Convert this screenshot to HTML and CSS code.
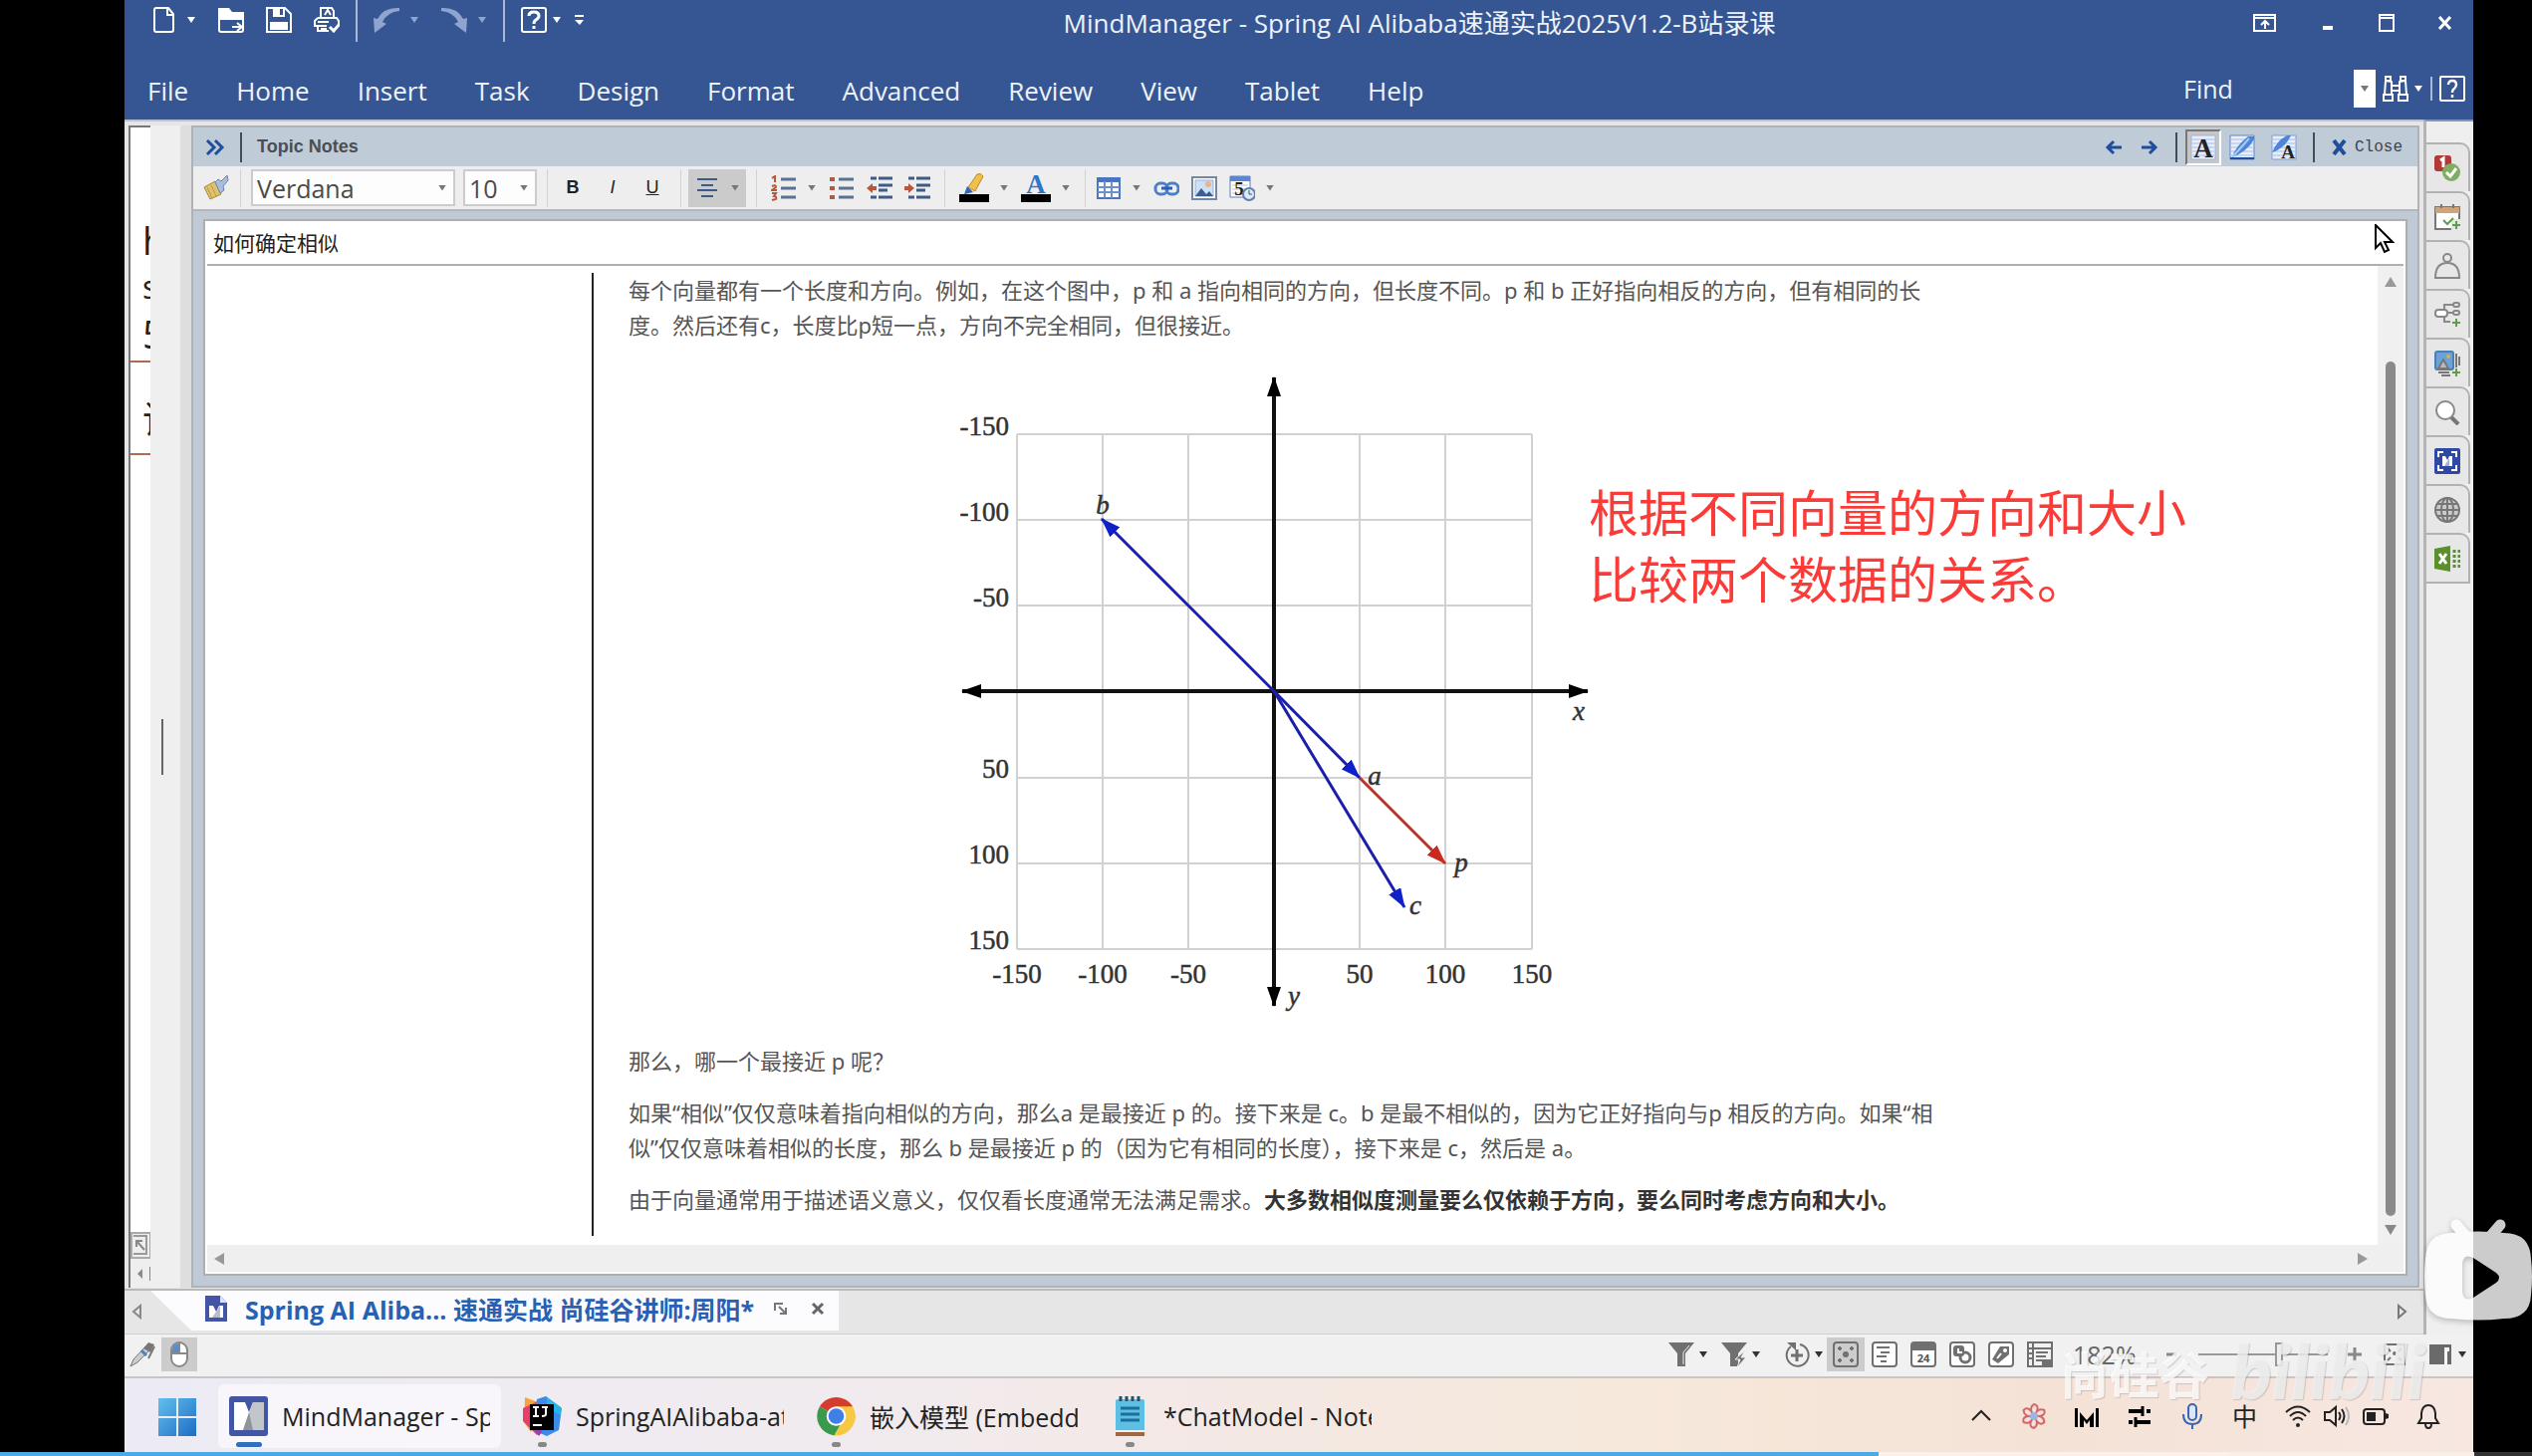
FILE: index.html
```html
<!DOCTYPE html>
<html lang="zh-CN">

<head>
  <meta charset="UTF-8" />
  <meta name="viewport" content="width=device-width, initial-scale=1" />
  <title>MindManager - Spring AI Alibaba速通实战2025V1.2-B站录课</title>
  <link rel="stylesheet" href="styles.css">
</head>

<body>
  <div class="stage">
    <header class="titlebar">
      <div class="title-row">
        <div class="quick-access">
          <button class="split" aria-label="New">
            <svg class="icon" viewBox="0 0 26 26"><path d="M4 3q0-2 2-2h12l5 6v16q0 2-2 2H6q-2 0-2-2zM17 1v7h6" fill="none" stroke="#fff" stroke-width="2"/></svg>
            <span class="caret"></span>
          </button>
          <button aria-label="Open">
            <svg class="icon" viewBox="0 0 26 26"><path d="M0 1h11l3 4h12v8H0z" fill="#fff"/><path d="M1 12v11q0 2 2 2h20q2 0 2-2V12" fill="none" stroke="#fff" stroke-width="2"/><path d="M14 20h10m-5-4 5 4-5 4" fill="none" stroke="#fff" stroke-width="2"/></svg>
          </button>
          <button aria-label="Save">
            <svg class="icon" viewBox="0 0 26 26"><path d="M1 1h18l6 6v18H1z" fill="none" stroke="#fff" stroke-width="2"/><path d="M7 1h12v9H7zM4 15h18v8H4z" fill="#fff"/><path d="M14 2h3v6h-3z" fill="#355693"/></svg>
          </button>
          <button aria-label="Print">
            <svg class="icon" viewBox="0 0 26 26" fill="none" stroke="#fff" stroke-width="2"><path d="M7 11V1h11l2 3v7M11 8l3-5 3 5M4 11h19l2 3v4M4 11l-3 3v5h12M4 15h11M4 20v4h11M7 22h6"/><path d="m16 20 4 4 6-7" stroke-width="3"/></svg>
          </button>
          <span class="rule"></span>
          <button class="split" aria-label="Undo">
            <svg class="icon" viewBox="0 0 26 26"><path d="M26 1Q10 0 4 12L0 11l1 15 12-9-4-2Q14 5 26 4z" fill="#8fa5cf"/></svg>
            <span class="caret dim"></span>
          </button>
          <button class="split" aria-label="Redo">
            <svg class="icon" viewBox="0 0 26 26"><path d="M0 1q16-1 22 11l4-1-1 15-12-9 4-2Q12 5 0 4z" fill="#8fa5cf"/></svg>
            <span class="caret dim"></span>
          </button>
          <span class="rule"></span>
          <button class="split tight" aria-label="Help">
            <svg class="icon" viewBox="0 0 26 26" fill="none" stroke="#fff"><rect x="1" y="1" width="24" height="24" rx="2" stroke-width="2"/><path d="M8 9q0-4 5-4t5 4q0 2-3 4-2 1-2 4m0 2v3" stroke-width="3"/></svg>
            <span class="caret"></span>
          </button>
          <button aria-label="Customize">
            <svg width="12" height="12" viewBox="0 0 12 12"><path d="M1 1h9v2H1zM1 6h9l-4 5z" fill="#fff"/></svg>
          </button>
        </div>
        <h1>MindManager - Spring AI Alibaba速通实战2025V1.2-B站录课</h1>
        <div class="window-controls">
          <button aria-label="Ribbon display"><svg width="24" height="18" viewBox="0 0 24 18" fill="none" stroke="#fff" stroke-width="2"><path d="M1 1h21v16H1zM1 4h21M12 15V7m-4 4 4-4 4 4"/></svg></button>
          <button aria-label="Minimize"><svg width="16" height="18" viewBox="0 0 16 18"><path d="M3 12h10v4H3z" fill="#fff"/></svg></button>
          <button aria-label="Maximize"><svg width="16" height="18" viewBox="0 0 16 18"><path d="M1 1h14v16H1zM1 4h14" fill="none" stroke="#fff" stroke-width="2"/></svg></button>
          <button aria-label="Close window"><svg width="16" height="18" viewBox="0 0 16 18"><path d="m2 3 11 12M13 3 2 15" stroke="#fff" stroke-width="3"/></svg></button>
        </div>
      </div>
      <div class="menu-row">
        <nav class="menu">
          <a href="#">File</a>
          <a href="#">Home</a>
          <a href="#">Insert</a>
          <a href="#">Task</a>
          <a href="#">Design</a>
          <a href="#">Format</a>
          <a href="#">Advanced</a>
          <a href="#">Review</a>
          <a href="#">View</a>
          <a href="#">Tablet</a>
          <a href="#">Help</a>
        </nav>
        <div class="find">
          <input type="text" aria-label="Find" placeholder="Find">
          <button class="find-drop" aria-label="Recent searches"><span class="caret grey"></span></button>
          <button class="split tight" aria-label="Search">
            <svg class="icon" viewBox="0 0 26 26" fill="none" stroke="#fff" stroke-width="2"><path d="M3 1h5v4H3zM18 1h5v4h-5zM3 5 2 19h7V6zM23 5l1 14h-7V6zM9 10h8M9 15h8M1 19h9v6H1zM16 19h9v6h-9z"/></svg>
            <span class="caret"></span>
          </button>
          <span class="rule short"></span>
          <button aria-label="Help topics">
            <svg class="icon" viewBox="0 0 26 26" fill="none" stroke="#fff" stroke-width="2"><rect x="1" y="1" width="24" height="24" rx="1"/><path d="M9 9q0-4 4-4t4 4q0 2-2 4-2 1-2 4m0 2v3" stroke-width="2.4"/></svg>
          </button>
        </div>
      </div>
    </header>

    <main class="workspace">
      <div class="work-column">
        <div class="work-area">
          <aside class="map-edge">
            <div class="map-canvas">
              <span class="node-text">h</span>
              <span class="node-text small">s</span>
              <span class="node-text">5</span>
              <hr>
              <span class="node-text cjk">讲</span>
              <hr>
            </div>
            <div class="map-corner">
              <svg width="22" height="28" viewBox="0 0 22 28"><path d="M1 1h19v25H1z" fill="#eee" stroke="#aaa" stroke-width="2"/><path d="M3 4h13v18H3" fill="none" stroke="#999" stroke-width="2"/><path d="m6 9 8 9M6 15V9h6" fill="none" stroke="#888" stroke-width="2"/></svg>
              <svg width="22" height="28" viewBox="0 0 22 28"><path d="m12 9-5 5 5 5z" fill="#888"/><path d="M20 7v14" stroke="#888" stroke-width="2"/></svg>
            </div>
          </aside>
          <div class="splitter"></div>

          <section class="panel">
            <div class="panel-head">
              <button aria-label="Collapse"><svg width="20" height="16" viewBox="0 0 20 16" fill="none" stroke="#1f4f9c" stroke-width="3"><path d="m2 1 7 7-7 7M10 1l7 7-7 7"/></svg></button>
              <span class="rule dark"></span>
              <h2>Topic Notes</h2>
              <div class="panel-tools">
                <button aria-label="Previous"><svg width="20" height="18" viewBox="0 0 20 18" fill="none" stroke="#1f4f9c" stroke-width="3"><path d="M18 9H4m6-6L4 9l6 6"/></svg></button>
                <button aria-label="Next"><svg width="20" height="18" viewBox="0 0 20 18" fill="none" stroke="#1f4f9c" stroke-width="3"><path d="M2 9h14m-6-6 6 6-6 6"/></svg></button>
                <span class="rule dark"></span>
                <button class="pressed" aria-label="Text view"><svg class="icon" viewBox="0 0 26 26"><path d="M1 1h24v24H1z" fill="#e8eefb" stroke="#9db4de"/><path d="M2 5h22M2 9h22M2 13h22M2 17h22M2 21h22" stroke="#a9bde3"/><text x="13" y="23" text-anchor="middle" class="letter">A</text></svg></button>
                <button aria-label="Ink view"><svg class="icon" viewBox="0 0 26 26"><path d="M1 1h24v24H1z" fill="#e8eefb" stroke="#5f86cc"/><path d="M2 5h22M2 9h22M2 13h22M2 17h22M2 21h22" stroke="#a9bde3"/><path d="M3 23Q6 12 19 2h6v3Q18 17 3 23z" fill="#4d86d8"/><path d="M3 23 20 4" stroke="#a8cbf5" stroke-width="2"/><path d="M1 24h24" stroke="#1f4f9c" stroke-width="2"/></svg></button>
                <button aria-label="Mixed view"><svg class="icon" viewBox="0 0 26 26"><path d="M1 1h24v24H1z" fill="#e8eefb" stroke="#7f9dd4"/><path d="M2 5h22M2 9h22M2 13h22M2 17h22M2 21h22" stroke="#a9bde3"/><path d="M1 18Q6 6 16 1h4Q14 14 1 18z" fill="#4d86d8"/><text x="17" y="24" text-anchor="middle" class="letter mini">A</text></svg></button>
                <span class="rule dark"></span>
                <button class="close-notes"><svg width="18" height="16" viewBox="0 0 18 16"><path d="m3 1 11 14M14 1 3 15" stroke="#1f4f9c" stroke-width="4"/></svg>Close</button>
              </div>
            </div>

            <div class="toolbar">
              <div class="group first">
                <button aria-label="Format painter"><svg class="icon" viewBox="0 0 26 26"><path d="m1 12 6 12 11-5-6-13z" fill="#dfc36c" stroke="#a8883a"/><path d="m4 12 5 11M8 10l5 11" stroke="#b99a48"/><path d="m12 7 3-3 3 2 6-6 1 5-5 6 1 4-4 3z" fill="#a9bddc" stroke="#6e82a3"/></svg></button>
              </div>
              <div class="group fonts">
                <div class="select wide"><select aria-label="Font"><option>Verdana</option></select><span class="caret grey"></span></div>
                <div class="select"><select aria-label="Font size"><option>10</option></select><span class="caret grey"></span></div>
              </div>
              <div class="group marks">
                <button><b>B</b></button>
                <button><i>I</i></button>
                <button><u>U</u></button>
              </div>
              <div class="group align">
                <button class="split active" aria-label="Align">
                  <svg class="icon" viewBox="0 0 26 26"><path d="M3 4h20M7 10h12M3 15h20M7 21h12" stroke="#3e5a86" stroke-width="2"/></svg>
                  <span class="caret grey"></span>
                </button>
              </div>
              <div class="group">
                <button class="split" aria-label="Numbered list">
                  <svg class="icon" viewBox="0 0 26 26"><path d="M10 4h15M10 13h15M10 22h15" stroke="#5a7191" stroke-width="3"/><path d="m1 3 3-2v6M1 11q4-2 4 1l-4 3h5M1 18h4l-2 3q3 0 2 3l-4 1" fill="none" stroke="#b8573c" stroke-width="2"/></svg>
                  <span class="caret grey"></span>
                </button>
                <button aria-label="Bulleted list"><svg class="icon" viewBox="0 0 26 26"><path d="M10 4h15M10 13h15M10 22h15" stroke="#5a7191" stroke-width="3"/><path d="M1 2h5v4H1zM1 11h5v4H1zM1 20h5v4H1z" fill="#b8573c"/></svg></button>
                <button aria-label="Decrease indent"><svg class="icon" viewBox="0 0 26 26"><path d="M4 3h6M12 3h14M12 10h14M12 15h9M4 22h6M12 22h14" stroke="#3e5a86" stroke-width="3"/><path d="m0 13 6-5v3h4v4H6v3z" fill="#b8573c"/></svg></button>
                <button aria-label="Increase indent"><svg class="icon" viewBox="0 0 26 26"><path d="M4 3h6M12 3h14M12 10h14M12 15h9M4 22h6M12 22h14" stroke="#3e5a86" stroke-width="3"/><path d="m10 13-6-5v3H0v4h4v3z" fill="#b8573c"/></svg></button>
              </div>
              <div class="group">
                <button class="split" aria-label="Highlight">
                  <svg width="30" height="30" viewBox="0 0 30 30"><path d="M0 21h30v8H0z"/><path d="m9 14 9-13q4-2 6 2l-8 15z" fill="#f0bf4c" stroke="#b98a2b"/><path d="m5 21 3-8 6 6z" fill="#2f66b5"/></svg>
                  <span class="caret grey"></span>
                </button>
                <button class="split" aria-label="Font color">
                  <svg width="30" height="30" viewBox="0 0 30 30"><path d="M0 21h30v8H0z"/><text x="15" y="20" text-anchor="middle" class="letter blue">A</text></svg>
                  <span class="caret grey"></span>
                </button>
              </div>
              <div class="group">
                <button class="split" aria-label="Table">
                  <svg class="icon" viewBox="0 0 26 26"><path d="M2 3h22v20H2z" fill="#fff" stroke="#4a74c0" stroke-width="2"/><path d="M2 3h22v4H2z" fill="#4a74c0"/><path d="M2 12h22M2 17h22M9 6v17M16 6v17" stroke="#6d90cf" stroke-width="2"/></svg>
                  <span class="caret grey"></span>
                </button>
                <button aria-label="Link"><svg class="icon" viewBox="0 0 26 26" fill="none" stroke="#4a7fd0" stroke-width="3"><rect x="2" y="8" width="12" height="11" rx="5"/><rect x="13" y="8" width="12" height="11" rx="5"/><path d="M8 13h11" stroke="#2f5fae"/></svg></button>
                <button aria-label="Picture"><svg class="icon" viewBox="0 0 26 26"><path d="M1 2h24v22H1z" fill="#fff" stroke="#7487a5" stroke-width="2"/><path d="M4 5h18v16H4z" fill="#cfe0f5" stroke="#9bb0cf"/><circle cx="17" cy="9" r="3" fill="#e8b48f"/><path d="m4 21 6-8 5 6 3-3 4 5z" fill="#3a5f8f"/></svg></button>
                <button class="split" aria-label="Date and time">
                  <svg class="icon" viewBox="0 0 26 26"><path d="M1 1h20v21H1z" fill="#fff" stroke="#5b7fc2"/><path d="M1 1h20v5H1z" fill="#5b86d8"/><path d="M3 10h16M3 14h16M3 18h16" stroke="#aebfe0"/><text x="10" y="20" text-anchor="middle" class="letter mini">5</text><circle cx="20" cy="19" r="6" fill="#dbe9fb" stroke="#5f7ea8" stroke-width="2"/><path d="M20 15v4h3" fill="none" stroke="#456" /></svg>
                  <span class="caret grey"></span>
                </button>
              </div>
            </div>

            <div class="editor">
              <div class="note">
                <div class="note-title">如何确定相似</div>
                <div class="note-body">
                  <article>
                    <p>每个向量都有一个长度和方向。例如，在这个图中，p 和 a 指向相同的方向，但长度不同。p 和 b 正好指向相反的方向，但有相同的长<br>度。然后还有c，长度比p短一点，方向不完全相同，但很接近。</p>
                    <figure>
                      <svg class="chart" viewBox="959 361 640 670">
                        <defs>
                          <marker id="tip-black" viewBox="0 0 20 14" refX="19" refY="7" markerWidth="20" markerHeight="14" markerUnits="userSpaceOnUse" orient="auto-start-reverse"><path d="M0 0l20 7-20 7z"/></marker>
                          <marker id="tip-blue" viewBox="0 0 20 14" refX="19" refY="7" markerWidth="20" markerHeight="14" markerUnits="userSpaceOnUse" orient="auto"><path d="M0 0l20 7-20 7z" fill="#1020c8"/></marker>
                          <marker id="tip-red" viewBox="0 0 20 14" refX="19" refY="7" markerWidth="20" markerHeight="14" markerUnits="userSpaceOnUse" orient="auto"><path d="M0 0l20 7-20 7z" fill="#c82a20"/></marker>
                        </defs>
                        <path class="grid-lines" d="M1021 436H1538M1021 522H1538M1021 608H1538M1021 781H1538M1021 867H1538M1021 953H1538M1021 436V953M1107 436V953M1193 436V953M1365 436V953M1451 436V953M1538 436V953"/>
                        <path class="axis" d="M966 694H1594"/>
                        <path class="axis" d="M1279 379V1010"/>
                        <path d="M1365 781 1451 867" stroke="#b8342c" stroke-width="3" marker-end="url(#tip-red)"/>
                        <g stroke="#1a1fa8" stroke-width="3">
                          <path d="M1279 694 1106 521" marker-end="url(#tip-blue)"/>
                          <path d="M1279 694 1365 781" marker-end="url(#tip-blue)"/>
                          <path d="M1279 694 1410 911" marker-end="url(#tip-blue)"/>
                        </g>
                        <g class="ticks" text-anchor="end">
                          <text x="1013" y="437">-150</text>
                          <text x="1013" y="523">-100</text>
                          <text x="1013" y="609">-50</text>
                          <text x="1013" y="781">50</text>
                          <text x="1013" y="867">100</text>
                          <text x="1013" y="953">150</text>
                        </g>
                        <g class="ticks" text-anchor="middle">
                          <text x="1021" y="987">-150</text>
                          <text x="1107" y="987">-100</text>
                          <text x="1193" y="987">-50</text>
                          <text x="1365" y="987">50</text>
                          <text x="1451" y="987">100</text>
                          <text x="1538" y="987">150</text>
                        </g>
                        <g class="names" text-anchor="middle">
                          <text x="1107" y="516">b</text>
                          <text x="1380" y="788">a</text>
                          <text x="1467" y="875">p</text>
                          <text x="1421" y="918">c</text>
                          <text x="1585" y="723">x</text>
                          <text x="1299" y="1009">y</text>
                        </g>
                      </svg>
                      <figcaption>根据不同向量的方向和大小<br>比较两个数据的关系。</figcaption>
                    </figure>
                    <p>那么，哪一个最接近 p 呢？</p>
                    <p>如果“相似”仅仅意味着指向相似的方向，那么a 是最接近 p 的。接下来是 c。b 是最不相似的，因为它正好指向与p 相反的方向。如果“相<br>似”仅仅意味着相似的长度，那么 b 是最接近 p 的（因为它有相同的长度），接下来是 c，然后是 a。</p>
                    <p>由于向量通常用于描述语义意义，仅仅看长度通常无法满足需求。<strong>大多数相似度测量要么仅依赖于方向，要么同时考虑方向和大小。</strong></p>
                  </article>
                  <div class="vscroll">
                    <svg width="14" height="12" viewBox="0 0 14 12"><path d="M7 1 13 11H1z" fill="#999"/></svg>
                    <span class="thumb"></span>
                    <svg width="14" height="12" viewBox="0 0 14 12"><path d="M7 11 1 1h12z" fill="#888"/></svg>
                  </div>
                </div>
                <div class="hscroll">
                  <svg width="12" height="14" viewBox="0 0 12 14"><path d="M1 7 11 1v12z" fill="#999"/></svg>
                  <svg width="12" height="14" viewBox="0 0 12 14"><path d="M11 7 1 1v12z" fill="#999"/></svg>
                </div>
              </div>
            </div>
          </section>
        </div>

        <div class="doc-tabs">
          <button class="tab-scroll" aria-label="Previous document"><svg width="12" height="16" viewBox="0 0 12 16"><path d="m9 2-7 6 7 6z" fill="none" stroke="#888" stroke-width="2"/></svg></button>
          <div class="doc-tab">
            <svg class="icon" viewBox="0 0 26 26"><path d="M2 0h15l7 7v19H2z" fill="#4256a5"/><path d="M17 0v7h7z" fill="#dfe3f3"/><path d="M6 10h4l3 6 3-6h4v12H6z" fill="#fff"/><path d="m9 22 8-12v12z" fill="#b9bdc8"/></svg>
            <span>Spring AI Aliba... 速通实战 尚硅谷讲师:周阳*</span>
            <button aria-label="Pin"><svg width="14" height="14" viewBox="0 0 14 14" fill="none" stroke="#777" stroke-width="2"><path d="M1 9V2h8M5 5l7 7M12 6v6H6"/></svg></button>
            <button aria-label="Close document"><svg width="14" height="14" viewBox="0 0 14 14"><path d="m2 2 10 10M12 2 2 12" stroke="#666" stroke-width="3"/></svg></button>
          </div>
          <button class="tab-scroll last" aria-label="Next document"><svg width="12" height="16" viewBox="0 0 12 16"><path d="m2 2 7 6-7 6z" fill="none" stroke="#777" stroke-width="2"/></svg></button>
        </div>
      </div>

      <nav class="side-tabs">
        <button aria-label="Markers"><svg class="icon" viewBox="0 0 26 26"><rect width="17" height="16" rx="3" fill="#b0393a"/><path d="m6 5 3-2v9" fill="none" stroke="#fff" stroke-width="3"/><circle cx="17" cy="17" r="9" fill="#7fad62"/><path d="m12 17 4 4 6-8" fill="none" stroke="#fff" stroke-width="3"/></svg></button>
        <button aria-label="Task info"><svg class="icon" viewBox="0 0 26 26"><path d="M1 3h24v22H1z" fill="#fff" stroke="#777" stroke-width="2"/><path d="M1 3h24v6H1z" fill="#cfa478"/><path d="M7 0v4M19 0v4" stroke="#777" stroke-width="2"/><path d="M17 15h9v11h-9z" fill="#e6e6e6"/><path d="m9 16 4 4 6-6M22 17v8M18 21h8" fill="none" stroke="#5d9e4c" stroke-width="2"/></svg></button>
        <button aria-label="Resources"><svg class="icon" viewBox="0 0 26 26" fill="none" stroke="#888" stroke-width="2"><circle cx="13" cy="5" r="4"/><path d="M1 25q0-15 12-15t12 15z"/></svg></button>
        <button aria-label="Map parts"><svg class="icon" viewBox="0 0 26 26" fill="none" stroke="#888" stroke-width="2"><rect x="1" y="8" width="12" height="7" rx="3" fill="#fff"/><path d="M10 8V3h10M13 11h7M10 15v5h6"/><rect x="19" y="1" width="6" height="4" rx="2"/><rect x="19" y="9" width="6" height="4" rx="2"/><path d="M22 17v8M18 21h8" stroke="#5d9e4c"/></svg></button>
        <button aria-label="Image library"><svg class="icon" viewBox="0 0 26 26" fill="none" stroke="#777" stroke-width="2"><path d="M22 3v14M25 6v9M4 22h11M7 25h9"/><rect x="1" y="1" width="18" height="18" rx="2" fill="#6ba2da" stroke="#4d7fb4"/><path d="m4 18 5-9 5 9z" fill="#bbb"/><circle cx="14" cy="6" r="1" stroke="#dcae4c"/><path d="M22 18v8M18 22h8" stroke="#5d9e4c"/></svg></button>
        <button aria-label="Search panel"><svg class="icon" viewBox="0 0 26 26"><path d="m17 18 7 7" stroke="#777" stroke-width="4"/><circle cx="11" cy="11" r="9" fill="#fff" stroke="#888" stroke-width="2"/></svg></button>
        <button aria-label="Snap"><svg class="icon" viewBox="0 0 26 26"><rect width="26" height="26" rx="2" fill="#2f48a8"/><path d="M4 9V4h5M17 4h5v5M22 17v5h-5M9 22H4v-5" fill="none" stroke="#fff" stroke-width="2"/><path d="M8 8h3l2 4 2-4h3v10H8z" fill="#fff"/><path d="m10 18 5-8v8z" fill="#a8b0d0"/></svg></button>
        <button aria-label="Browser"><svg class="icon" viewBox="0 0 26 26" fill="none" stroke="#777" stroke-width="2"><circle cx="13" cy="13" r="12" fill="#ccc"/><ellipse cx="13" cy="13" rx="6" ry="12"/><path d="M13 1v24M1 13h24M3 7h20M3 19h20"/></svg></button>
        <button aria-label="Excel"><svg class="icon" viewBox="0 0 26 26"><path d="m0 3 16-3v26L0 23z" fill="#5a8f2c"/><path d="m5 8 7 10M12 8 5 18" stroke="#fff" stroke-width="3"/><path d="M20 4v20M25 4v20" stroke="#5a8f2c" stroke-width="3" stroke-dasharray="3 2"/></svg></button>
      </nav>
    </main>

    <footer class="status">
      <button aria-label="Pen"><svg class="icon" viewBox="0 0 26 26"><path d="M1 25 4 18 18 3l4 4L8 21z" fill="#ccc" stroke="#777"/><path d="m14 7 5-6 6 2-4 8z" fill="#777"/><path d="m12 9 5 5" stroke="#4c7fc4" stroke-width="3"/><path d="m25 5-6 12" stroke="#777" stroke-width="2"/></svg></button>
      <button class="lit" aria-label="Mouse"><svg class="icon" viewBox="0 0 26 26"><rect x="5" y="1" width="16" height="24" rx="8" fill="#fff" stroke="#888" stroke-width="2"/><path d="M13 2v10H6V9q0-7 7-7z" fill="#5b8bc8"/><path d="M5 12h16M13 1v11" stroke="#888" stroke-width="2"/></svg></button>
      <div class="status-right">
        <div class="filters">
          <button class="split" aria-label="Filter"><svg class="icon" viewBox="0 0 26 26"><path d="M0 1h26L17 12v13H9V12z" fill="#707070"/><path d="M21 4 15 11v12" fill="none" stroke="#eee"/></svg><span class="caret black"></span></button>
          <button class="split" aria-label="Quick filter"><svg class="icon" viewBox="0 0 26 26"><path d="M0 1h26L17 12v13H9V12z" fill="#707070"/><path d="m24 9-10 9h5l-3 8 9-10h-5z" fill="#707070" stroke="#eee"/></svg><span class="caret black"></span></button>
          <button class="split detail" aria-label="Zoom detail"><svg class="icon" viewBox="0 0 26 26" fill="none" stroke="#707070" stroke-width="2"><path d="M16 3a11 11 0 1 1-9 2"/><path d="M7 14h12M13 8v12" stroke-width="3"/><path d="M3 1h9v8z" fill="#707070" stroke="none"/></svg><span class="caret black"></span></button>
        </div>
        <div class="views">
          <button class="lit" aria-label="Map view"><svg class="icon" viewBox="0 0 26 26"><rect x="1" y="1" width="24" height="24" rx="3" fill="none" stroke="#707070" stroke-width="2"/><circle cx="13" cy="13" r="3" fill="#707070"/><path d="M5 7h4M7 5v4M17 7h4M19 5v4M5 19h4M7 17v4M17 19h4M19 17v4" stroke="#707070" stroke-width="2"/></svg></button>
          <button aria-label="Outline view"><svg class="icon" viewBox="0 0 26 26"><rect x="1" y="1" width="24" height="24" rx="3" fill="#fff" stroke="#707070" stroke-width="2"/><path d="M5 6h13M9 11h9M5 15h10M9 20h6" stroke="#707070" stroke-width="2"/></svg></button>
          <button aria-label="Schedule view"><svg class="icon" viewBox="0 0 26 26"><rect x="1" y="1" width="24" height="24" rx="3" fill="#fff" stroke="#707070" stroke-width="2"/><path d="M1 1h24v8H1z" fill="#707070"/><text x="13" y="21" text-anchor="middle" class="day">24</text></svg></button>
          <button aria-label="Icon view"><svg class="icon" viewBox="0 0 26 26"><rect x="1" y="1" width="24" height="24" rx="3" fill="#fff" stroke="#707070" stroke-width="2"/><rect x="4" y="4" width="11" height="11" rx="3" fill="#707070"/><circle cx="16" cy="16" r="5" fill="none" stroke="#707070" stroke-width="3"/><path d="M9 7v4h4" fill="none" stroke="#fff" stroke-width="2"/></svg></button>
          <button aria-label="Tag view"><svg class="icon" viewBox="0 0 26 26"><rect x="1" y="1" width="24" height="24" rx="3" fill="#fff" stroke="#707070" stroke-width="2"/><path d="m4 18 8-13h9v8L10 22z" fill="#707070"/><circle cx="17" cy="9" r="2" fill="#fff"/><path d="m9 17 4-5" stroke="#fff" stroke-width="2"/></svg></button>
          <button aria-label="Gantt view"><svg class="icon" viewBox="0 0 26 26" fill="none" stroke="#707070" stroke-width="2"><path d="M1 1h24v24H1zM6 1v24M1 7h24M9 11h12M9 15h10M9 19h6M1 12h4M1 17h4"/><path d="M16 19h8v6h-8z" fill="#707070"/></svg></button>
        </div>
        <output class="zoom-value">182%</output>
        <div class="zoom">
          <button aria-label="Zoom out"><svg width="14" height="14" viewBox="0 0 14 14"><path d="M2 7h10" stroke="#888" stroke-width="3"/></svg></button>
          <input type="range" aria-label="Zoom" min="0" max="100" value="63">
          <button aria-label="Zoom in"><svg width="14" height="14" viewBox="0 0 14 14"><path d="M0 7h14M7 0v14" stroke="#888" stroke-width="3"/></svg></button>
        </div>
        <button aria-label="Fit map"><svg class="icon" viewBox="0 0 26 26"><rect x="3" y="3" width="20" height="20" fill="none" stroke="#707070" stroke-width="2"/><circle cx="13" cy="12" r="2" fill="#777"/><path d="m6 7 3 3M20 7l-3 3M6 19l3-3M20 19l-3-3" stroke="#777" stroke-width="2"/></svg></button>
        <button class="split" aria-label="Panels"><svg class="icon" viewBox="0 0 26 26"><path d="M2 3h22v20H2z" fill="#6a6a6a"/><path d="M17 6h5v4h-2v13h-3z" fill="#f4f4f4"/></svg><span class="caret black"></span></button>
      </div>
    </footer>

    <div class="taskbar">
      <button class="start" aria-label="Start"><svg width="38" height="39" viewBox="0 0 38 39"><defs><linearGradient id="win" x2="1" y2="1"><stop stop-color="#62c0ee"/><stop offset="1" stop-color="#1d6cc4"/></linearGradient></defs><path d="M0 1h18v18H0zM20 1h18v18H20zM0 21h18v18H0zM20 21h18v18H20z" fill="url(#win)"/></svg></button>
      <button class="task current">
        <svg width="39" height="40" viewBox="0 0 39 40"><rect width="39" height="40" rx="3" fill="#4256a5"/><path d="M5 6h11l4 10 4-10h11v28H5z" fill="#fff"/><path d="M24 6h11v28H14z" fill="#c2c5cc"/><path d="m14 34 6-18 4 18z" fill="#8f939c"/></svg>
        <span>MindManager - Spring AI Alibaba</span>
      </button>
      <button class="task">
        <svg width="39" height="40" viewBox="0 0 39 40"><path d="M2 1 20 8 8 36 1 26z" fill="#f9a13a"/><path d="M0 12 15 5l5 30-6 4L0 25z" fill="#e83e6b"/><path d="m14 3 9-3 16 12-3 22-12 6-14-6z" fill="#3a8ce8"/><path d="M24 1 38 11v8L24 12z" fill="#28b4e8"/><path d="M1 20 10 32l10 3-4 5z" fill="#9c3fb5"/><path d="M7 8h24v26H7z"/><path d="M10 11h6M13 11v9M10 20h6M19 11h6M23 11v7q0 2-4 2M10 29h9" fill="none" stroke="#fff" stroke-width="2"/></svg>
        <span>SpringAIAlibaba-atguiguV1</span>
      </button>
      <button class="task">
        <svg width="39" height="40" viewBox="0 0 40 40"><path d="M20 20 3 10a20 20 0 0 1 34 0z" fill="#d63b2f"/><path d="M20 20 3 10a20 20 0 0 0 15 30l9-16z" fill="#3a9a4b"/><path d="M20 20h9l-11 20a20 20 0 0 0 19-30H20z" fill="#f8c840"/><circle cx="20" cy="20" r="10" fill="#fff"/><circle cx="20" cy="20" r="8" fill="#3f7fe8"/></svg>
        <span>嵌入模型 (Embedding Model)</span>
      </button>
      <button class="task">
        <svg width="39" height="40" viewBox="0 0 39 40"><rect x="5" y="3" width="29" height="35" rx="2" fill="#5cc0e4"/><path d="M5 36h29v4H5z" fill="#a0683f"/><path d="M5 34h29v2H5z" fill="#e8f4f8"/><path d="M10 12h19M10 18h19M10 24h19" stroke="#1f6c9a" stroke-width="3"/><path d="M10 0v5M16 0v5M22 0v5M28 0v5" stroke="#22516b" stroke-width="3"/></svg>
        <span>*ChatModel - Notepad</span>
      </button>
      <div class="tray">
        <svg class="icon" viewBox="0 0 26 26"><path d="m4 17 9-9 9 9" fill="none" stroke="#222" stroke-width="2"/></svg>
        <svg class="icon flower" viewBox="0 0 26 26" fill="none" stroke="#d0686c" stroke-width="2"><path id="petal" d="M13 13Q7 5 13 1q5 1 3 7"/><use href="#petal" transform="rotate(60 13 13)"/><use href="#petal" transform="rotate(120 13 13)"/><use href="#petal" transform="rotate(180 13 13)"/><use href="#petal" transform="rotate(240 13 13)"/><use href="#petal" transform="rotate(300 13 13)"/><circle cx="13" cy="13" r="3" fill="#9cb4e4" stroke="#9cb4e4"/></svg>
        <svg class="icon" viewBox="0 0 26 26"><path d="M1 5h3v19H1zM22 5h3v19h-3zM6 9l7 8 7-8v15h-4v-7l-3 4-3-4v7H6z"/></svg>
        <svg class="icon" viewBox="0 0 26 26"><path d="M2 8h14M20 8h4M2 19h4M10 19h14" stroke="#000" stroke-width="4"/><path d="M16 3v10M9 14v10" stroke="#000" stroke-width="3"/></svg>
        <svg class="icon" viewBox="0 0 26 26" fill="none" stroke="#3c65b0" stroke-width="2"><rect x="9" y="1" width="8" height="16" rx="4" fill="#dbe6f8"/><path d="M4 11q0 10 9 10t9-10M13 21v5"/></svg>
        <span class="ime">中</span>
        <svg class="icon" viewBox="0 0 26 26" fill="none" stroke="#222" stroke-width="2"><path d="M1 9q12-11 24 0M5 13q8-8 16 0M8 17q5-5 10 0"/><circle cx="13" cy="22" r="2" fill="#222" stroke="none"/></svg>
        <svg class="icon" viewBox="0 0 26 26" fill="none" stroke="#222" stroke-width="2"><path d="M1 9h5l6-5v18l-6-5H1zM15 9q3 4 0 8M18 6q5 7 0 14"/><path d="M22 4q6 9 0 18" stroke="#bbb"/></svg>
        <svg class="icon" viewBox="0 0 26 26"><rect x="1" y="6" width="21" height="15" rx="3" fill="none" stroke="#222" stroke-width="2"/><path d="M4 9h9v9H4zM23 10l3 1v4l-3 1z" fill="#222"/></svg>
        <svg class="icon bell" viewBox="0 0 26 26" fill="none" stroke="#222" stroke-width="2"><path d="M3 20h20l-3-5v-5q-1-8-7-8t-7 8v5zM10 21q0 4 3 4t3-4"/></svg>
      </div>
    </div>
  </div>

  <div class="progress"><div class="buffered"></div><div class="played"></div></div>

  <!-- player overlays -->
  <svg class="pointer" width="20" height="30" viewBox="0 0 20 30"><path d="M1 1v23l5-5 4 9 4-2-4-8h8z" fill="#fff" stroke="#000" stroke-width="2"/></svg>
  <div class="watermark"><span>尚硅谷</span><em>bilibili</em></div>
  <button class="player-play" aria-label="Play">
    <svg width="108" height="108" viewBox="0 0 108 108"><path d="m32 9 12 14M76 9 64 23" stroke="#fff" stroke-width="11" stroke-linecap="round"/><path fill-rule="evenodd" d="M28 17q26-3 52 0 26 0 27 26 2 18 0 36-1 24-27 24-26 3-52 0Q2 103 1 79q-2-18 0-36Q2 17 28 17zM38 48v28q1 11 11 6l23-15q6-5 0-10L49 42q-10-5-11 6z" fill="#fff"/></svg>
  </button>
</body>

</html>
```
FILE: styles.css
```css
* {
  box-sizing: border-box;
}

body {
  margin: 0;
  height: 100vh;
  display: flex;
  flex-direction: column;
  position: relative;
  overflow: hidden;
  background: #000;
  color: #222;
  font-family: "Open Sans", "Noto Sans CJK SC", sans-serif;
  font-size: 25px;
}

button {
  display: flex;
  align-items: center;
  justify-content: center;
  padding: 0;
  border: none;
  background: none;
  color: inherit;
  font: inherit;
}

svg {
  display: block;
  flex: none;
}

.icon {
  width: 26px;
  height: 26px;
}

.letter {
  font: bold 27px "Liberation Serif", serif;
  fill: #222;
}

.letter.mini {
  font-size: 19px;
}

.letter.blue {
  fill: #2f76c9;
}

.caret {
  flex: none;
  width: 10px;
  height: 6px;
  background: #fff;
  clip-path: polygon(10% 0, 90% 0, 50% 100%);
}

.caret.dim {
  background: #8fa5cf;
}

.caret.grey {
  background: #777;
}

.caret.black {
  background: #333;
}

.split {
  gap: 10px;
}

.split.tight {
  gap: 5px;
}

.rule {
  flex: none;
  width: 2px;
  height: 44px;
  background: #a9b8d6;
}

.rule.short {
  height: 24px;
}

.rule.dark {
  height: 30px;
  background: #444c58;
}

/* Window frame */
.stage {
  flex: 1;
  min-height: 0;
  display: flex;
  flex-direction: column;
  margin: 0 59px 0 125px;
  background: #eee;
}

.titlebar {
  height: 120px;
  background: #355693;
  color: #eef2fa;
}

.title-row {
  height: 48px;
  display: flex;
  align-items: flex-start;
}

.quick-access {
  display: flex;
  gap: 22px;
  height: 40px;
  align-items: center;
  padding-left: 26px;
}

.quick-access .rule {
  margin: 0 -6px;
}

.quick-access .tight {
  margin-right: -10px;
}

.title-row h1 {
  flex: 1;
  margin: 0;
  padding-top: 6px;
  font-size: 26px;
  font-weight: 400;
  line-height: 34px;
  text-align: center;
  white-space: nowrap;
}

.window-controls {
  display: flex;
  gap: 43px;
  padding: 14px 20px 0 0;
}

.menu-row {
  height: 72px;
  display: flex;
  justify-content: space-between;
  align-items: center;
  padding: 14px 8px 0 23px;
}

.menu {
  display: flex;
  gap: 48px;
}

.menu a {
  color: inherit;
  font-size: 26px;
  line-height: 36px;
  text-decoration: none;
}

.find {
  display: flex;
  align-items: center;
  gap: 7px;
  margin-top: -4px;
}

.find input {
  width: 164px;
  padding: 0;
  border: none;
  background: none;
  color: inherit;
  font: inherit;
}

.find input::placeholder {
  color: #eef2fa;
  opacity: 1;
}

.find-drop {
  width: 22px;
  height: 38px;
  background: #fff;
}

/* Work area */
.workspace {
  flex: 1;
  min-height: 0;
  display: flex;
}

.work-column {
  flex: 1;
  min-width: 0;
  display: flex;
  flex-direction: column;
}

.work-area {
  flex: 1;
  min-height: 0;
  display: flex;
  padding: 4px 4px 1px;
  border-top: 2px solid #b9c2d6;
  background: #e6e6e8;
}

.map-edge {
  width: 22px;
  display: flex;
  flex-direction: column;
  border-left: 2px solid #777;
  border-top: 2px solid #777;
  background: #fff;
  overflow: hidden;
}

.map-canvas {
  flex: 1;
  padding-top: 86px;
}

.node-text {
  display: block;
  margin-left: 12px;
  font-size: 38px;
  line-height: 54px;
  white-space: nowrap;
}

.node-text.small {
  font-size: 32px;
  line-height: 40px;
}

.node-text.cjk {
  padding-top: 21px;
  line-height: 70px;
}

.map-canvas hr {
  height: 2px;
  margin: 0;
  border: none;
  background: #b06a50;
}

.map-corner {
  background: #eee;
}

.splitter {
  width: 41px;
  display: flex;
  align-items: center;
  justify-content: center;
  padding: 80px 6px 0 0;
  background: #efefef;
  border-right: 11px solid #dedede;
}

.splitter::before {
  content: "";
  width: 2px;
  height: 56px;
  background: #666;
}

.panel {
  flex: 1;
  min-width: 0;
  display: flex;
  flex-direction: column;
  border: 2px solid #b0b2b4;
  background: #c0cad6;
}

.panel-head {
  height: 39px;
  display: flex;
  align-items: center;
  gap: 15px;
  padding: 0 15px 0 12px;
  background: #bfcbd7;
}

.panel-head h2 {
  flex: 1;
  margin: 0;
  color: #4a4e56;
  font: bold 18px "Liberation Sans", sans-serif;
}

.panel-tools {
  display: flex;
  align-items: center;
  gap: 16px;
}

.panel-tools .pressed {
  width: 36px;
  height: 36px;
  margin: 0 -8px;
  border: 2px solid;
  border-color: #777 #fff #fff #777;
  background: #c6c6c6;
}

.close-notes {
  gap: 6px;
  color: #3c444e;
  font: 16px "Liberation Mono", monospace;
}

/* Formatting toolbar */
.toolbar {
  height: 45px;
  display: flex;
  align-items: center;
  background: #eee;
  border-bottom: 2px solid #b4b6b8;
}

.group {
  height: 38px;
  display: flex;
  align-items: center;
  gap: 12px;
  padding: 0 14px;
  border-right: 1px solid #d2d2d2;
}

.group.first {
  padding: 0 11px 0 10px;
}

.group:last-child {
  padding: 0 10px;
  border-right: none;
}

.group.fonts {
  gap: 8px;
  padding: 0 10px;
}

.select {
  width: 74px;
  height: 37px;
  display: flex;
  align-items: center;
  position: relative;
  border: 2px solid #ccc;
  background: #fdfdfd;
}

.select.wide {
  width: 205px;
}

.select select {
  width: 100%;
  height: 100%;
  padding: 0 0 0 4px;
  border: none;
  appearance: none;
  background: none;
  color: #4a4a4a;
  font: inherit;
}

.select .caret {
  position: absolute;
  right: 6px;
}

.group.marks {
  gap: 4px;
  padding: 0 10px 0 7px;
}

.marks button {
  width: 36px;
  height: 36px;
  font: 18px "Liberation Sans", sans-serif;
}

.marks b {
  font-weight: 700;
}

.group.align {
  padding: 0 10px 0 7px;
}

.align button {
  width: 58px;
  height: 38px;
}

.active {
  background: #cbcbcb;
}

/* Note */
.editor {
  flex: 1;
  min-height: 0;
  display: flex;
  padding: 8px 10px 10px;
}

.note {
  flex: 1;
  min-width: 0;
  display: flex;
  flex-direction: column;
  border: 2px solid #acaeb0;
  background: #fff;
}

.note-title {
  height: 45px;
  margin: 0 2px;
  padding-left: 6px;
  border-bottom: 2px solid #b0b0b0;
  font-size: 21px;
  line-height: 45px;
}

.note-body {
  flex: 1;
  min-height: 0;
  display: flex;
  justify-content: space-between;
}

article {
  margin: 7px 0 9px 388px;
  padding-left: 35px;
  border-left: 2px solid #222;
  color: #555;
  font-family: "Noto Sans", "Noto Sans CJK SC", sans-serif;
  font-size: 22px;
  line-height: 35px;
  white-space: nowrap;
}

article p {
  margin: 0 0 17px;
}

article strong {
  color: #333;
}

figure {
  position: relative;
  width: 1296px;
  margin: 0 0 17px;
}

.chart {
  width: 640px;
  height: 670px;
  margin: 0 auto;
}

.grid-lines {
  fill: none;
  stroke: #000;
  stroke-opacity: 0.18;
  stroke-width: 2;
}

.axis {
  stroke: #111;
  stroke-width: 4;
  marker-start: url(#tip-black);
  marker-end: url(#tip-black);
}

.ticks,
.names {
  fill: #333;
  stroke: #333;
  stroke-width: 0.5;
  font: 27px "Liberation Serif", serif;
}

.names {
  font-style: italic;
}

figcaption {
  position: absolute;
  left: 964px;
  top: 118px;
  color: #fb3b38;
  font-family: "Noto Sans CJK SC", sans-serif;
  font-size: 50px;
  line-height: 67px;
}

.vscroll {
  width: 26px;
  display: flex;
  flex-direction: column;
  align-items: center;
  gap: 8px;
  margin-right: 2px;
  padding: 10px 0 9px;
  background: #f0f0f0;
}

.vscroll .thumb {
  flex: 1;
  width: 10px;
  margin-top: 66px;
  border-radius: 5px;
  background: #8a8a8a;
}

.hscroll {
  height: 27px;
  display: flex;
  align-items: center;
  justify-content: space-between;
  margin: 0 2px 2px;
  padding: 0 35px 0 6px;
  background: #efefef;
}

/* Document tabs */
.doc-tabs {
  height: 46px;
  display: flex;
  align-items: flex-start;
  border-top: 2px solid #b9b9b9;
  border-bottom: 1px solid #cfcfcf;
  background: #e6e6e6;
}

.tab-scroll {
  width: 26px;
  height: 42px;
}

.tab-scroll.last {
  margin-left: auto;
  margin-right: 8px;
}

.doc-tab {
  height: 40px;
  display: flex;
  align-items: center;
  padding: 0 14px 4px 53px;
  background: #fcfcfe;
  clip-path: polygon(0 0, 100% 0, 100% 100%, 41px 100%);
  color: #2860b4;
  font-size: 25px;
  font-weight: 700;
}

.doc-tab span {
  margin: 0 20px 0 16px;
  white-space: nowrap;
}

.doc-tab button + button {
  margin-left: 23px;
}

/* Side tabs */
.side-tabs {
  width: 50px;
  padding: 21px 3px 0 0;
  border-left: 3px solid #b4b4b4;
  border-top: 2px solid #7f96c4;
  background: #efefef;
}

.side-tabs button {
  width: 100%;
  height: 49px;
  border: solid #b2b2b2;
  border-width: 2px 2px 0 0;
  border-top-right-radius: 10px;
  background: #e7e7e7;
}

.side-tabs button:last-child {
  height: 51px;
  border-bottom-width: 2px;
}

/* Status bar */
.status {
  height: 44px;
  display: flex;
  align-items: center;
  gap: 6px;
  padding: 0 6px 2px 5px;
  border-bottom: 2px solid #c9c5c6;
  background: #f1f1f1;
}

.status > .lit {
  width: 36px;
  height: 34px;
}

.lit {
  background: #ccc;
}

.status-right {
  margin-left: auto;
  display: flex;
  align-items: center;
  gap: 20px;
}

.status .split {
  gap: 4px;
}

.filters {
  display: flex;
  gap: 13px;
  margin-right: -11px;
}

.filters .detail {
  margin-left: 10px;
}

.views {
  display: flex;
  align-items: center;
  gap: 13px;
}

.views .lit {
  width: 38px;
  height: 34px;
  margin: 0 -6px;
}

.day {
  font: bold 11px "Open Sans", sans-serif;
  fill: #555;
}

.zoom-value {
  width: 72px;
  color: #666;
  line-height: 30px;
}

.zoom {
  display: flex;
  align-items: center;
  gap: 20px;
}

.zoom input {
  width: 130px;
  height: 24px;
  margin: 0;
  appearance: none;
  background: linear-gradient(#999, #999) center / 100% 2px no-repeat;
}

.zoom input::-webkit-slider-thumb {
  appearance: none;
  width: 8px;
  height: 24px;
  border: 2px solid #999;
  background: #eee;
}

/* Taskbar */
.taskbar {
  height: 74px;
  display: flex;
  align-items: center;
  gap: 11px;
  padding: 2px 0 0 34px;
  background: linear-gradient(90deg, #ecebf4, #f1ebef 30%, #f4e8e4 48%, #f6e8da 65%, #f4e2d6 82%, #f7e7e1);
}

.start {
  margin-right: 11px;
}

.task {
  width: 284px;
  height: 64px;
  position: relative;
  justify-content: flex-start;
  gap: 14px;
  padding: 0 11px;
  border-radius: 6px;
}

.task.current {
  background: #f8f6fb;
}

.task span {
  flex: 1;
  overflow: hidden;
  text-align: left;
  white-space: nowrap;
}

.task::after {
  content: "";
  position: absolute;
  left: 26px;
  bottom: 1px;
  width: 9px;
  height: 5px;
  border-radius: 3px;
  background: #888;
}

.task.current::after {
  left: 18px;
  width: 26px;
  background: #2f70bd;
}

.tray {
  margin-left: auto;
  display: flex;
  align-items: center;
  gap: 27px;
  padding-right: 32px;
}

.ime {
  width: 26px;
  color: #222;
  line-height: 30px;
}

.tray .ime ~ .icon {
  margin-right: -14px;
}

.tray .bell.icon {
  margin: 0 0 0 14px;
}

/* Player overlays */
.progress {
  height: 4px;
  position: relative;
  z-index: 1;
  background: linear-gradient(90deg, #f8efe9 97.7%, #333 97.7%);
}

.progress div {
  position: absolute;
  height: 100%;
}

.buffered {
  width: 88%;
  background: #fbf0ea;
}

.played {
  width: 74.2%;
  background: #4baae6;
}

.pointer {
  position: absolute;
  right: 138px;
  top: 225px;
}

.watermark {
  position: absolute;
  right: 106px;
  bottom: 34px;
  display: flex;
  align-items: center;
  gap: 22px;
  color: rgba(255, 255, 255, 0.8);
  font-size: 50px;
  font-weight: 700;
  line-height: 94px;
  text-shadow: 1px 1px 1px rgba(0, 0, 0, 0.15);
  pointer-events: none;
}

.watermark em {
  padding-bottom: 10px;
  color: rgba(240, 240, 240, 0.85);
  font: italic 900 76px/84px Lato, sans-serif;
}

.player-play {
  position: absolute;
  right: 0;
  bottom: 133px;
  opacity: 0.8;
  filter: drop-shadow(0 2px 3px rgba(0, 0, 0, 0.3));
}
```
